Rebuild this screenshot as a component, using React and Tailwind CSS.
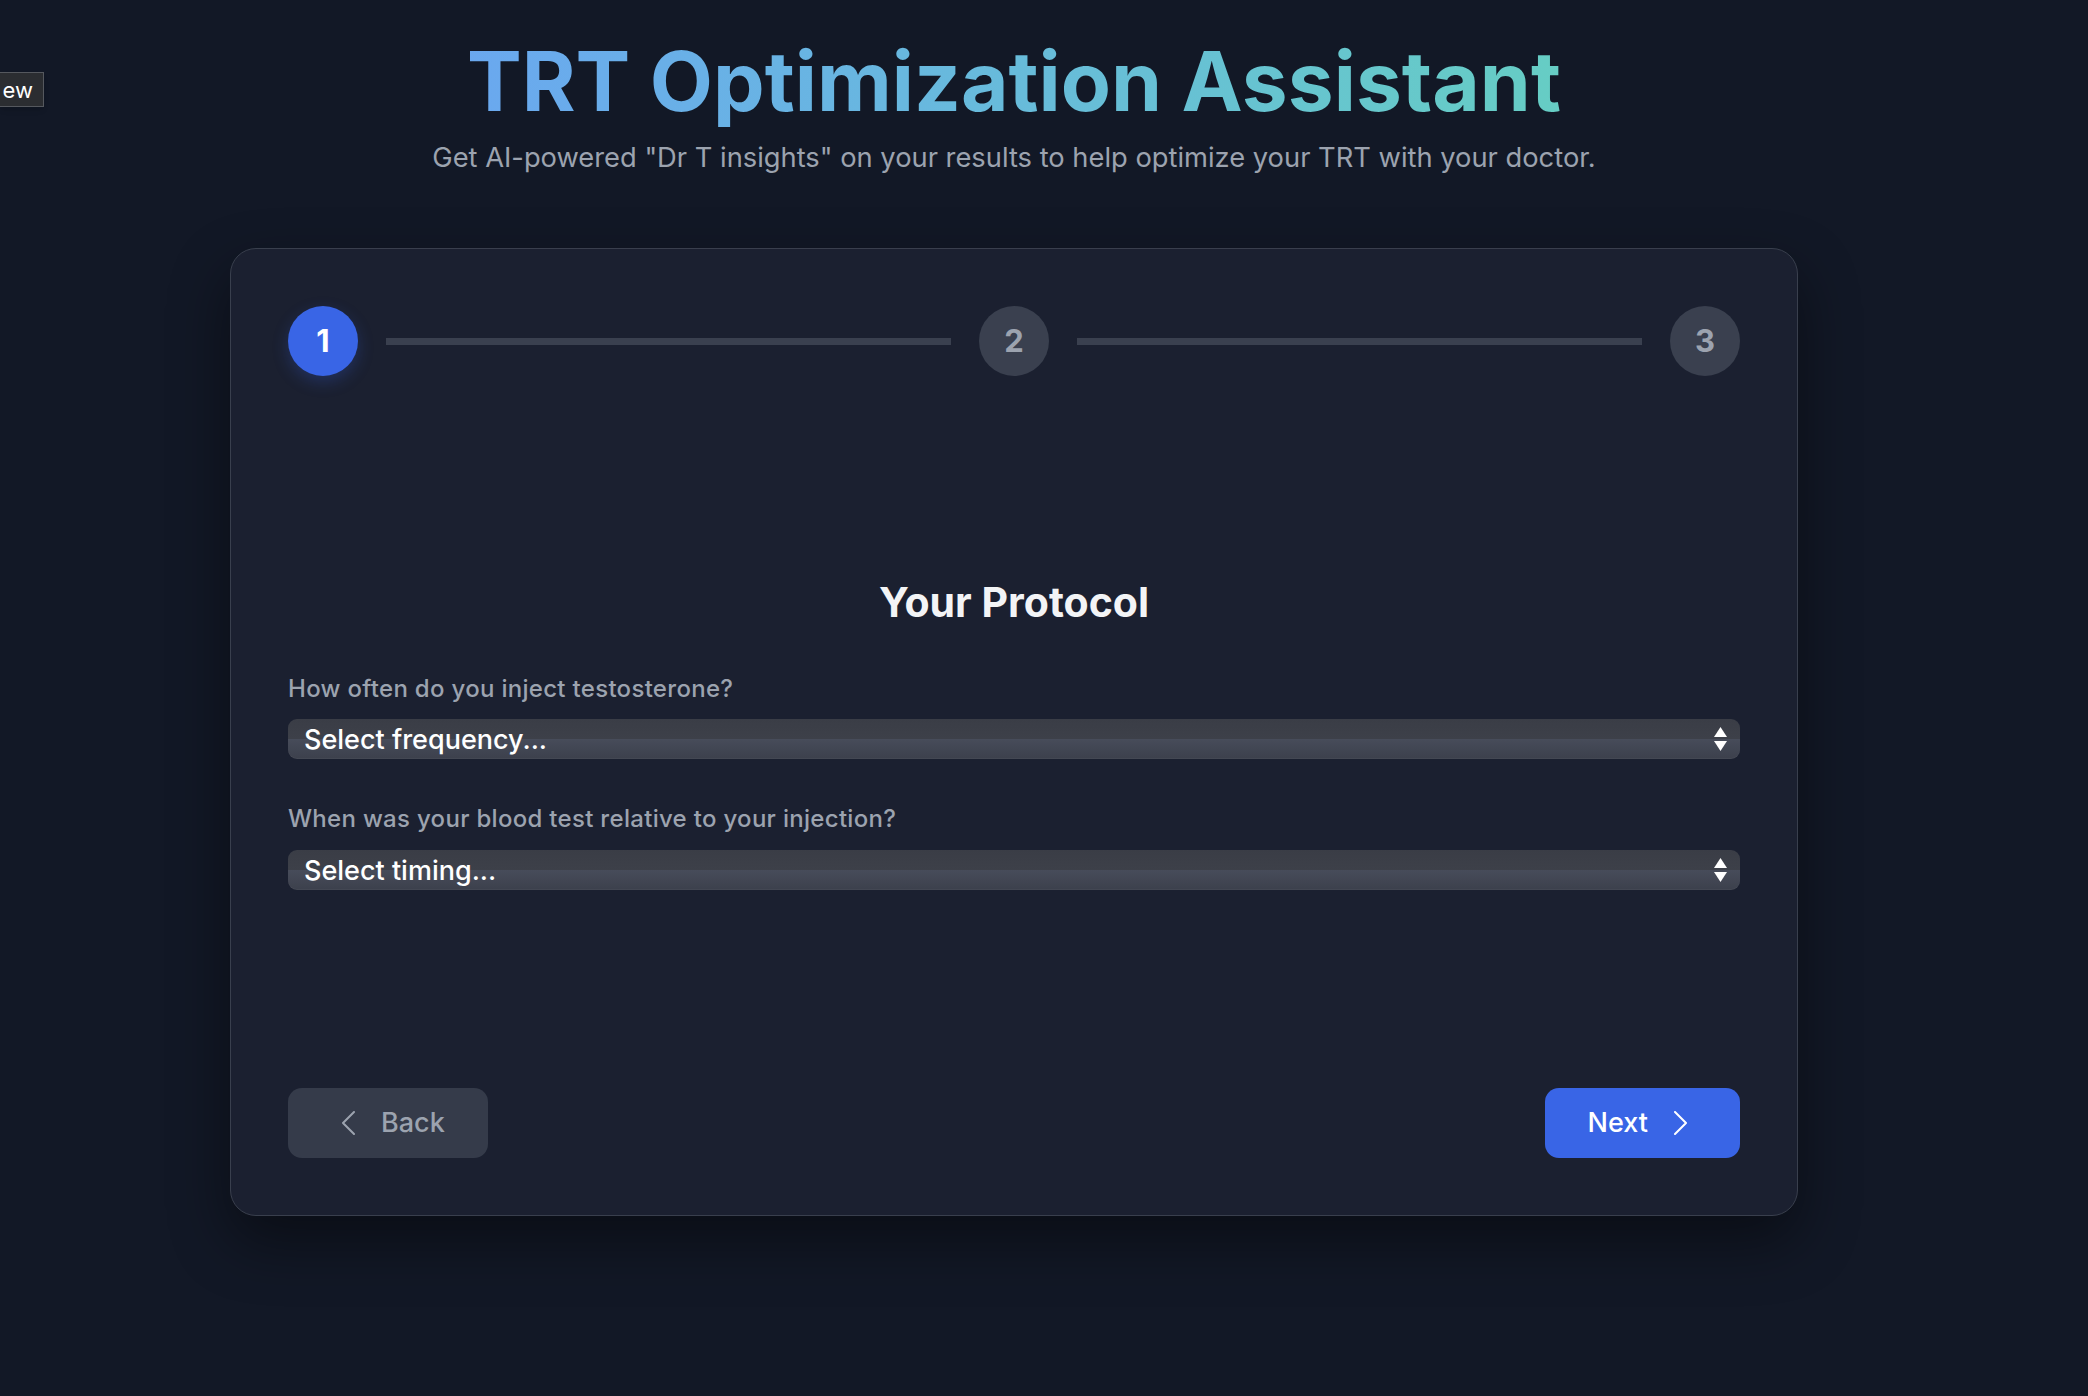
import { useState } from "react";

const steps = [1, 2, 3];

const ChevronLeft = () => (
  <svg width="14" height="24" viewBox="0 0 14 24" fill="none" stroke="currentColor" strokeWidth="2" strokeLinecap="round" strokeLinejoin="round">
    <polyline points="13,1 2,12 13,23" />
  </svg>
);

const ChevronRight = () => (
  <svg width="14" height="24" viewBox="0 0 14 24" fill="none" stroke="currentColor" strokeWidth="2" strokeLinecap="round" strokeLinejoin="round">
    <polyline points="1,1 12,12 1,23" />
  </svg>
);

const SelectBox = ({ placeholder }) => (
  <div className="relative h-[40px] w-full rounded-[9px] bg-[linear-gradient(to_bottom,#3a3d46_0%,#3d4049_50%,#474c5a_50%,#3c404c_100%)] shadow-[inset_0_-1px_0_rgba(255,255,255,0.04)] flex items-center pl-[16px] pr-[30px]">
    <span className="text-[27px] leading-none text-white font-medium">{placeholder}</span>
    <div className="absolute right-[13px] top-1/2 -translate-y-1/2 flex flex-col items-center gap-[4px]">
      <svg width="13" height="10" viewBox="0 0 13 10">
        <polygon points="6.5,0 13,10 0,10" fill="#ffffff" />
      </svg>
      <svg width="13" height="10" viewBox="0 0 13 10">
        <polygon points="0,0 13,0 6.5,10" fill="#ffffff" />
      </svg>
    </div>
  </div>
);

const App = () => {
  const [step] = useState(1);

  return (
    <div className="relative min-h-screen bg-[#121826] font-['Inter','Liberation_Sans',sans-serif] text-gray-100">
      <div className="absolute left-0 top-[72px] h-[35px] w-[44px] bg-[#2b2d31] border border-[#55585e] border-l-0 flex items-center justify-end pr-[10px] text-[22px] leading-none text-white shadow-md">
        ew
      </div>

      <div className="flex flex-col items-center pt-[41px] pr-[60px]">
        <h1 className="text-[82px] leading-none font-bold bg-gradient-to-r from-[#6aa8ef] to-[#66cdc4] bg-clip-text text-transparent pb-[4px]">
          TRT Optimization Assistant
        </h1>
        <p className="mt-[13px] text-[27.3px] leading-[36px] text-[#9ca3af]">
          Get AI-powered "Dr T insights" on your results to help optimize your TRT with your doctor.
        </p>

        <div className="mt-[72px] w-[1568px] rounded-[26px] border-[1.5px] border-[#393f4d] bg-[#1b2030] shadow-[0_25px_60px_rgba(0,0,0,0.45)] p-[57px]">
          <div className="flex items-center gap-[28px]">
            {steps.map((s, i) => (
              <div key={s} className={`flex items-center gap-[28px] ${i < steps.length - 1 ? "flex-1" : ""}`}>
                <div
                  className={`h-[70px] w-[70px] shrink-0 rounded-full flex items-center justify-center text-[31px] font-bold ${
                    s === step ? "bg-[#3965e6] text-white shadow-[0_6px_16px_rgba(57,101,230,0.25)]" : "bg-[#3a404f] text-[#9ca3af]"
                  }`}
                >
                  {s}
                </div>
                {i < steps.length - 1 && <div className="h-[7px] flex-1 bg-[#3a404f]" />}
              </div>
            ))}
          </div>

          <h2 className="mt-[202px] text-center text-[41px] leading-[49px] font-bold text-[#f3f4f6]">
            Your Protocol
          </h2>

          <div className="mt-[47px]">
            <label className="block text-[24px] leading-[30px] tracking-[0.3px] font-medium text-[#9ca3af] mb-[15px]">
              How often do you inject testosterone?
            </label>
            <SelectBox placeholder="Select frequency..." />
          </div>

          <div className="mt-[45px]">
            <label className="block text-[24px] leading-[30px] tracking-[0.3px] font-medium text-[#9ca3af] mb-[16px]">
              When was your blood test relative to your injection?
            </label>
            <SelectBox placeholder="Select timing..." />
          </div>

          <div className="mt-[198px] flex items-center justify-between">
            <button className="h-[70px] rounded-[14px] bg-[#353b4a] pl-[53px] pr-[43px] flex items-center gap-[26px] text-[27px] font-medium text-[#9ca3af]">
              <ChevronLeft />
              Back
            </button>
            <button className="h-[70px] rounded-[14px] bg-[#3965e6] pl-[43px] pr-[52px] flex items-center gap-[26px] text-[27px] font-medium text-white">
              Next
              <ChevronRight />
            </button>
          </div>
        </div>
      </div>
    </div>
  );
};

export default App;
